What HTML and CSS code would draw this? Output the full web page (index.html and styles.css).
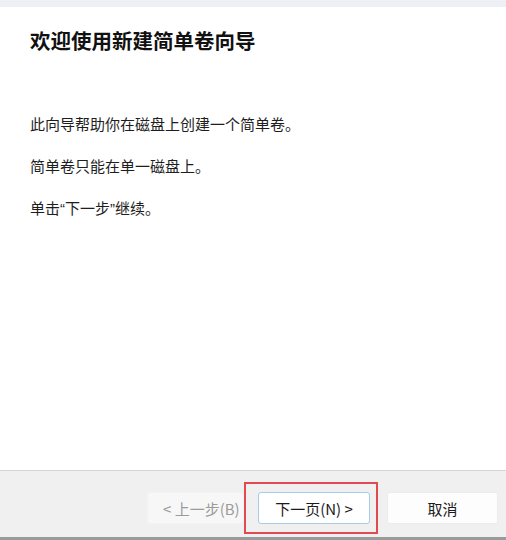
FILE: index.html
```html
<!DOCTYPE html>
<html lang="zh-CN">
<head>
<meta charset="utf-8">
<link rel="stylesheet" href="styles.css">
</head>
<body>
<div class="window">
  <div class="topstrip"></div>
  <main class="content">
    <h1 class="title">欢迎使用新建简单卷向导</h1>
    <p class="para first">此向导帮助你在磁盘上创建一个简单卷。</p>
    <p class="para">简单卷只能在单一磁盘上。</p>
    <p class="para">单击<span class="q">“</span>下一步<span class="q">”</span>继续。</p>
  </main>
  <footer class="footer">
    <div class="buttons">
      <button class="btn back" disabled>&lt; 上一步(B)</button>
      <div class="highlight-wrap">
        <button class="btn next">下一页(N) &gt;</button>
        <span class="highlight"></span>
      </div>
      <button class="btn cancel">取消</button>
    </div>
  </footer>
  <div class="bottomstrip"></div>
</div>
</body>
</html>
```

FILE: styles.css
```css
html, body {
  margin: 0;
  padding: 0;
  background: #ffffff;
}
body {
  font-family: "Noto Sans CJK SC", "Noto Sans", sans-serif;
  color: #1b1b1b;
}
.window {
  width: 506px;
  height: 540px;
  display: flex;
  flex-direction: column;
  overflow: hidden;
}
.topstrip {
  height: 7px;
  background: #eef0f5;
  flex: none;
}
.content {
  flex: 1;
  padding: 0 0 0 30px;
}
.title {
  margin: 20px 0 0 0;
  font-size: 20.5px;
  line-height: 26px;
  font-weight: 700;
  color: #111;
}
.para {
  margin: 0;
  font-size: 15px;
  line-height: 21px;
  color: #1e1e1e;
}
.para.first {
  margin-top: 60px;
}
.para + .para {
  margin-top: 21px;
}
.q {
  font-family: "Liberation Sans", "Noto Sans", sans-serif;
}
.footer {
  flex: none;
  height: 67px;
  background: #f0f0f0;
  border-top: 1px solid #d5d5d5;
  box-sizing: border-box;
}
.buttons {
  display: flex;
  justify-content: flex-end;
  align-items: flex-start;
  padding: 21px 8px 0 0;
}
.btn {
  height: 32px;
  box-sizing: border-box;
  font-family: "Noto Sans CJK SC", "Noto Sans", sans-serif;
  font-size: 15px;
  padding: 0;
  border-radius: 3px;
  color: #1b1b1b;
}
.back {
  width: 97px;
  background: #f7f7f7;
  border: 1px solid #f3f3f3;
  color: #9b9b9b;
  text-align: left;
  padding-left: 15px;
}
.highlight-wrap {
  position: relative;
  margin-left: 14px;
}
.next {
  width: 112px;
  background: #ffffff;
  border: 1px solid #a9cbe8;
  display: block;
}
.highlight {
  position: absolute;
  left: -14px;
  top: -10px;
  width: 134px;
  height: 52px;
  border: 2px solid #e04a50;
  box-sizing: border-box;
}
.cancel {
  width: 111px;
  margin-left: 17px;
  background: #fdfdfd;
  border: 1px solid #ececec;
}
.bottomstrip {
  flex: none;
  height: 3px;
  background: #9a9a9a;
}
```
